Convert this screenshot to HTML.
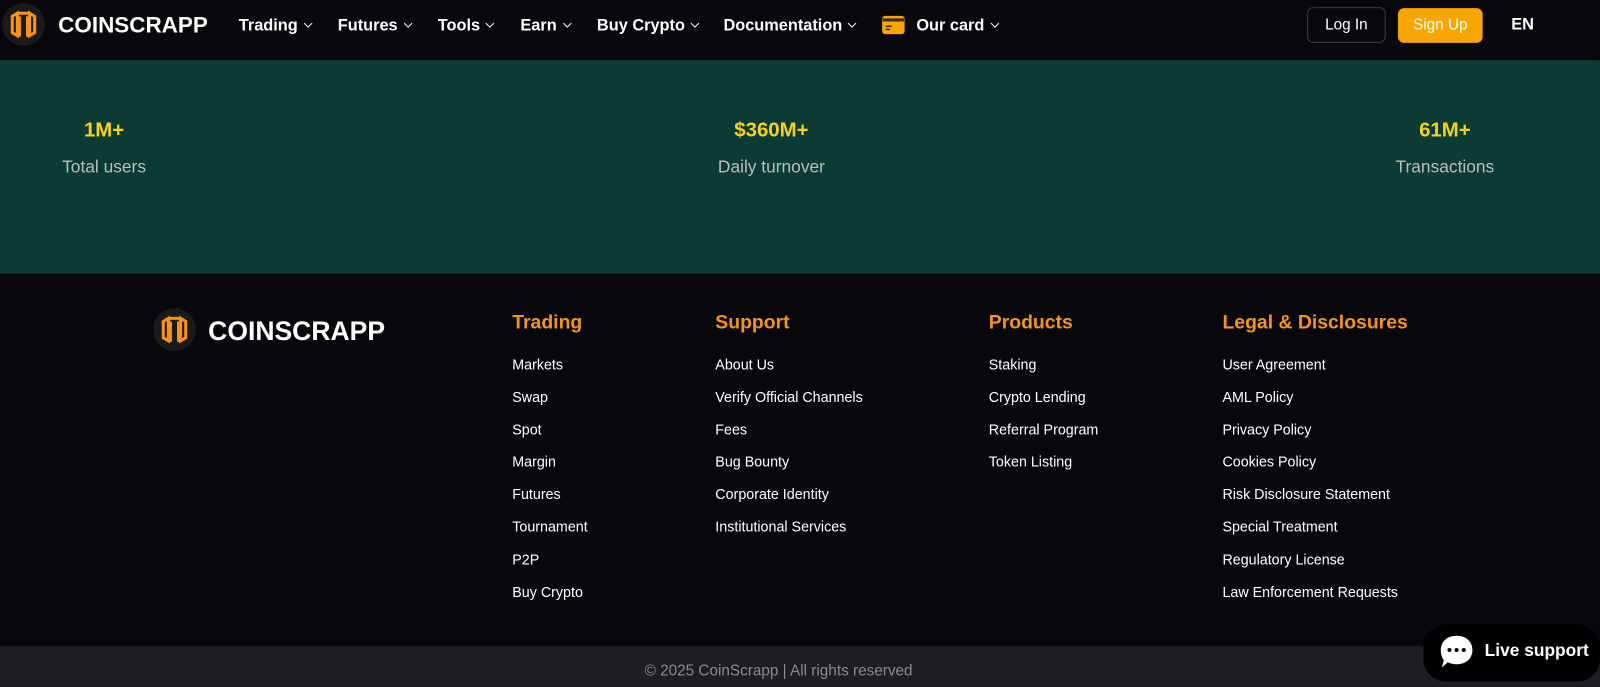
<!DOCTYPE html>
<html><head><meta charset="utf-8">
<style>
*{margin:0;padding:0;box-sizing:border-box}
body{width:1600px;height:679px;overflow:hidden;background:#08080c;font-family:"Liberation Sans",sans-serif;color:#fff;position:relative}
#w{position:absolute;left:0;top:0;width:1568px;height:666px;transform:scale(1.0204);transform-origin:0 0}
.hdr{position:absolute;top:0;left:0;width:1568px;height:59px;background:#08080c}
.abs{position:absolute;white-space:nowrap}
.nav{font-weight:bold;font-size:16px;top:17px}
.chev{display:inline-block;width:6px;height:6px;border-right:1.6px solid #fff;border-bottom:1.6px solid #fff;transform:rotate(45deg);margin-left:7px;position:relative;top:-4px}
.band{position:absolute;top:59px;left:0;width:1568px;height:209px;background:#0b3b32}
.num{color:#f6d31a;font-weight:bold;font-size:20px;top:117px;text-align:center}
.lbl{color:#b5c0bd;font-size:17px;top:154px;text-align:center}
.fh{color:#f7931a;font-weight:bold;font-size:19px;top:306px}
.fl{font-size:14px;color:#fff;line-height:31.8px;top:342px}
.bot{position:absolute;top:633px;left:0;width:1568px;height:40px;background:#1e1e22}
</style></head><body>
<div id="w">
<div class="hdr"></div>
<svg class="abs" style="left:2px;top:3px" width="42" height="42" viewBox="0 0 42 42"><circle cx="21" cy="21" r="21" fill="#1a1a1a"/><path d="M10 13 L15 10 L15 32 L10 29 Z M32 13 L27 10 L27 32 L32 29 Z M15 10 L27 10 M17 13 L17 33 M25 13 L25 33" fill="none" stroke="#f7931a" stroke-width="3"/></svg>
<div class="abs" style="left:57px;top:12px;font-weight:bold;font-size:22px">COINSCRAPP</div>
<div class="abs nav" style="left:234px">Trading<span class="chev"></span></div>
<div class="abs nav" style="left:331px">Futures<span class="chev"></span></div>
<div class="abs nav" style="left:429px">Tools<span class="chev"></span></div>
<div class="abs nav" style="left:510px">Earn<span class="chev"></span></div>
<div class="abs nav" style="left:585px">Buy Crypto<span class="chev"></span></div>
<div class="abs nav" style="left:709px">Documentation<span class="chev"></span></div>
<svg class="abs" style="left:864px;top:15px" width="23" height="19" viewBox="0 0 23 19"><rect x="0.5" y="0.5" width="22" height="18" rx="3" fill="#f7a600"/><rect x="1" y="3" width="21" height="3" fill="#3a2a00"/><rect x="4" y="10" width="6" height="1.5" fill="#3a2a00"/><rect x="4" y="13" width="4" height="1.5" fill="#3a2a00"/></svg>
<div class="abs nav" style="left:898px">Our card<span class="chev"></span></div>
<div class="abs" style="left:1281px;top:7px;width:77px;height:35px;border:1px solid #3a3a40;border-radius:6px;font-size:15px;text-align:center;line-height:33px">Log In</div>
<div class="abs" style="left:1370px;top:8px;width:83px;height:34px;background:#f7a600;border-radius:6px;font-size:15px;text-align:center;line-height:34px">Sign Up</div>
<div class="abs" style="left:1481px;top:16px;font-weight:bold;font-size:16px">EN</div>

<div class="band"></div>
<div class="abs num" style="left:2px;width:200px">1M+</div>
<div class="abs lbl" style="left:2px;width:200px">Total users</div>
<div class="abs num" style="left:656px;width:200px">$360M+</div>
<div class="abs lbl" style="left:656px;width:200px">Daily turnover</div>
<div class="abs num" style="left:1316px;width:200px">61M+</div>
<div class="abs lbl" style="left:1316px;width:200px">Transactions</div>

<svg class="abs" style="left:150px;top:302px" width="42" height="42" viewBox="0 0 42 42"><circle cx="21" cy="21" r="21" fill="#1a1a1a"/><path d="M10 13 L15 10 L15 32 L10 29 Z M32 13 L27 10 L27 32 L32 29 Z M15 10 L27 10 M17 13 L17 33 M25 13 L25 33" fill="none" stroke="#f7931a" stroke-width="3"/></svg>
<div class="abs" style="left:204px;top:309px;font-weight:bold;font-size:26px">COINSCRAPP</div>

<div class="abs fh" style="left:502px">Trading</div>
<div class="abs fl" style="left:502px">Markets<br>Swap<br>Spot<br>Margin<br>Futures<br>Tournament<br>P2P<br>Buy Crypto</div>
<div class="abs fh" style="left:701px">Support</div>
<div class="abs fl" style="left:701px">About Us<br>Verify Official Channels<br>Fees<br>Bug Bounty<br>Corporate Identity<br>Institutional Services</div>
<div class="abs fh" style="left:969px">Products</div>
<div class="abs fl" style="left:969px">Staking<br>Crypto Lending<br>Referral Program<br>Token Listing</div>
<div class="abs fh" style="left:1198px">Legal &amp; Disclosures</div>
<div class="abs fl" style="left:1198px">User Agreement<br>AML Policy<br>Privacy Policy<br>Cookies Policy<br>Risk Disclosure Statement<br>Special Treatment<br>Regulatory License<br>Law Enforcement Requests</div>

<div class="bot"></div>
<div class="abs" style="left:0;width:1526px;text-align:center;top:649px;font-size:15px;color:#8a8a90">© 2025 CoinScrapp | All rights reserved</div>
<div class="abs" style="left:1395px;top:612px;width:173px;height:56px;background:#000;border-radius:22px"></div>
<svg class="abs" style="left:1409px;top:620px" width="37" height="37" viewBox="0 0 37 37"><path d="M18.5 3 C28 3 34 9 34 17 C34 25 28 31 18.5 31 C15 31 12 30 10 29 L4 34 L6 27 C4 24.5 3 21 3 17 C3 9 9 3 18.5 3 Z" fill="#fff"/><circle cx="11.5" cy="17" r="2" fill="#000"/><circle cx="18.5" cy="17" r="2" fill="#000"/><circle cx="25.5" cy="17" r="2" fill="#000"/></svg>
<div class="abs" style="left:1455px;top:628px;font-weight:bold;font-size:17px">Live support</div>
</div>
</body></html>
